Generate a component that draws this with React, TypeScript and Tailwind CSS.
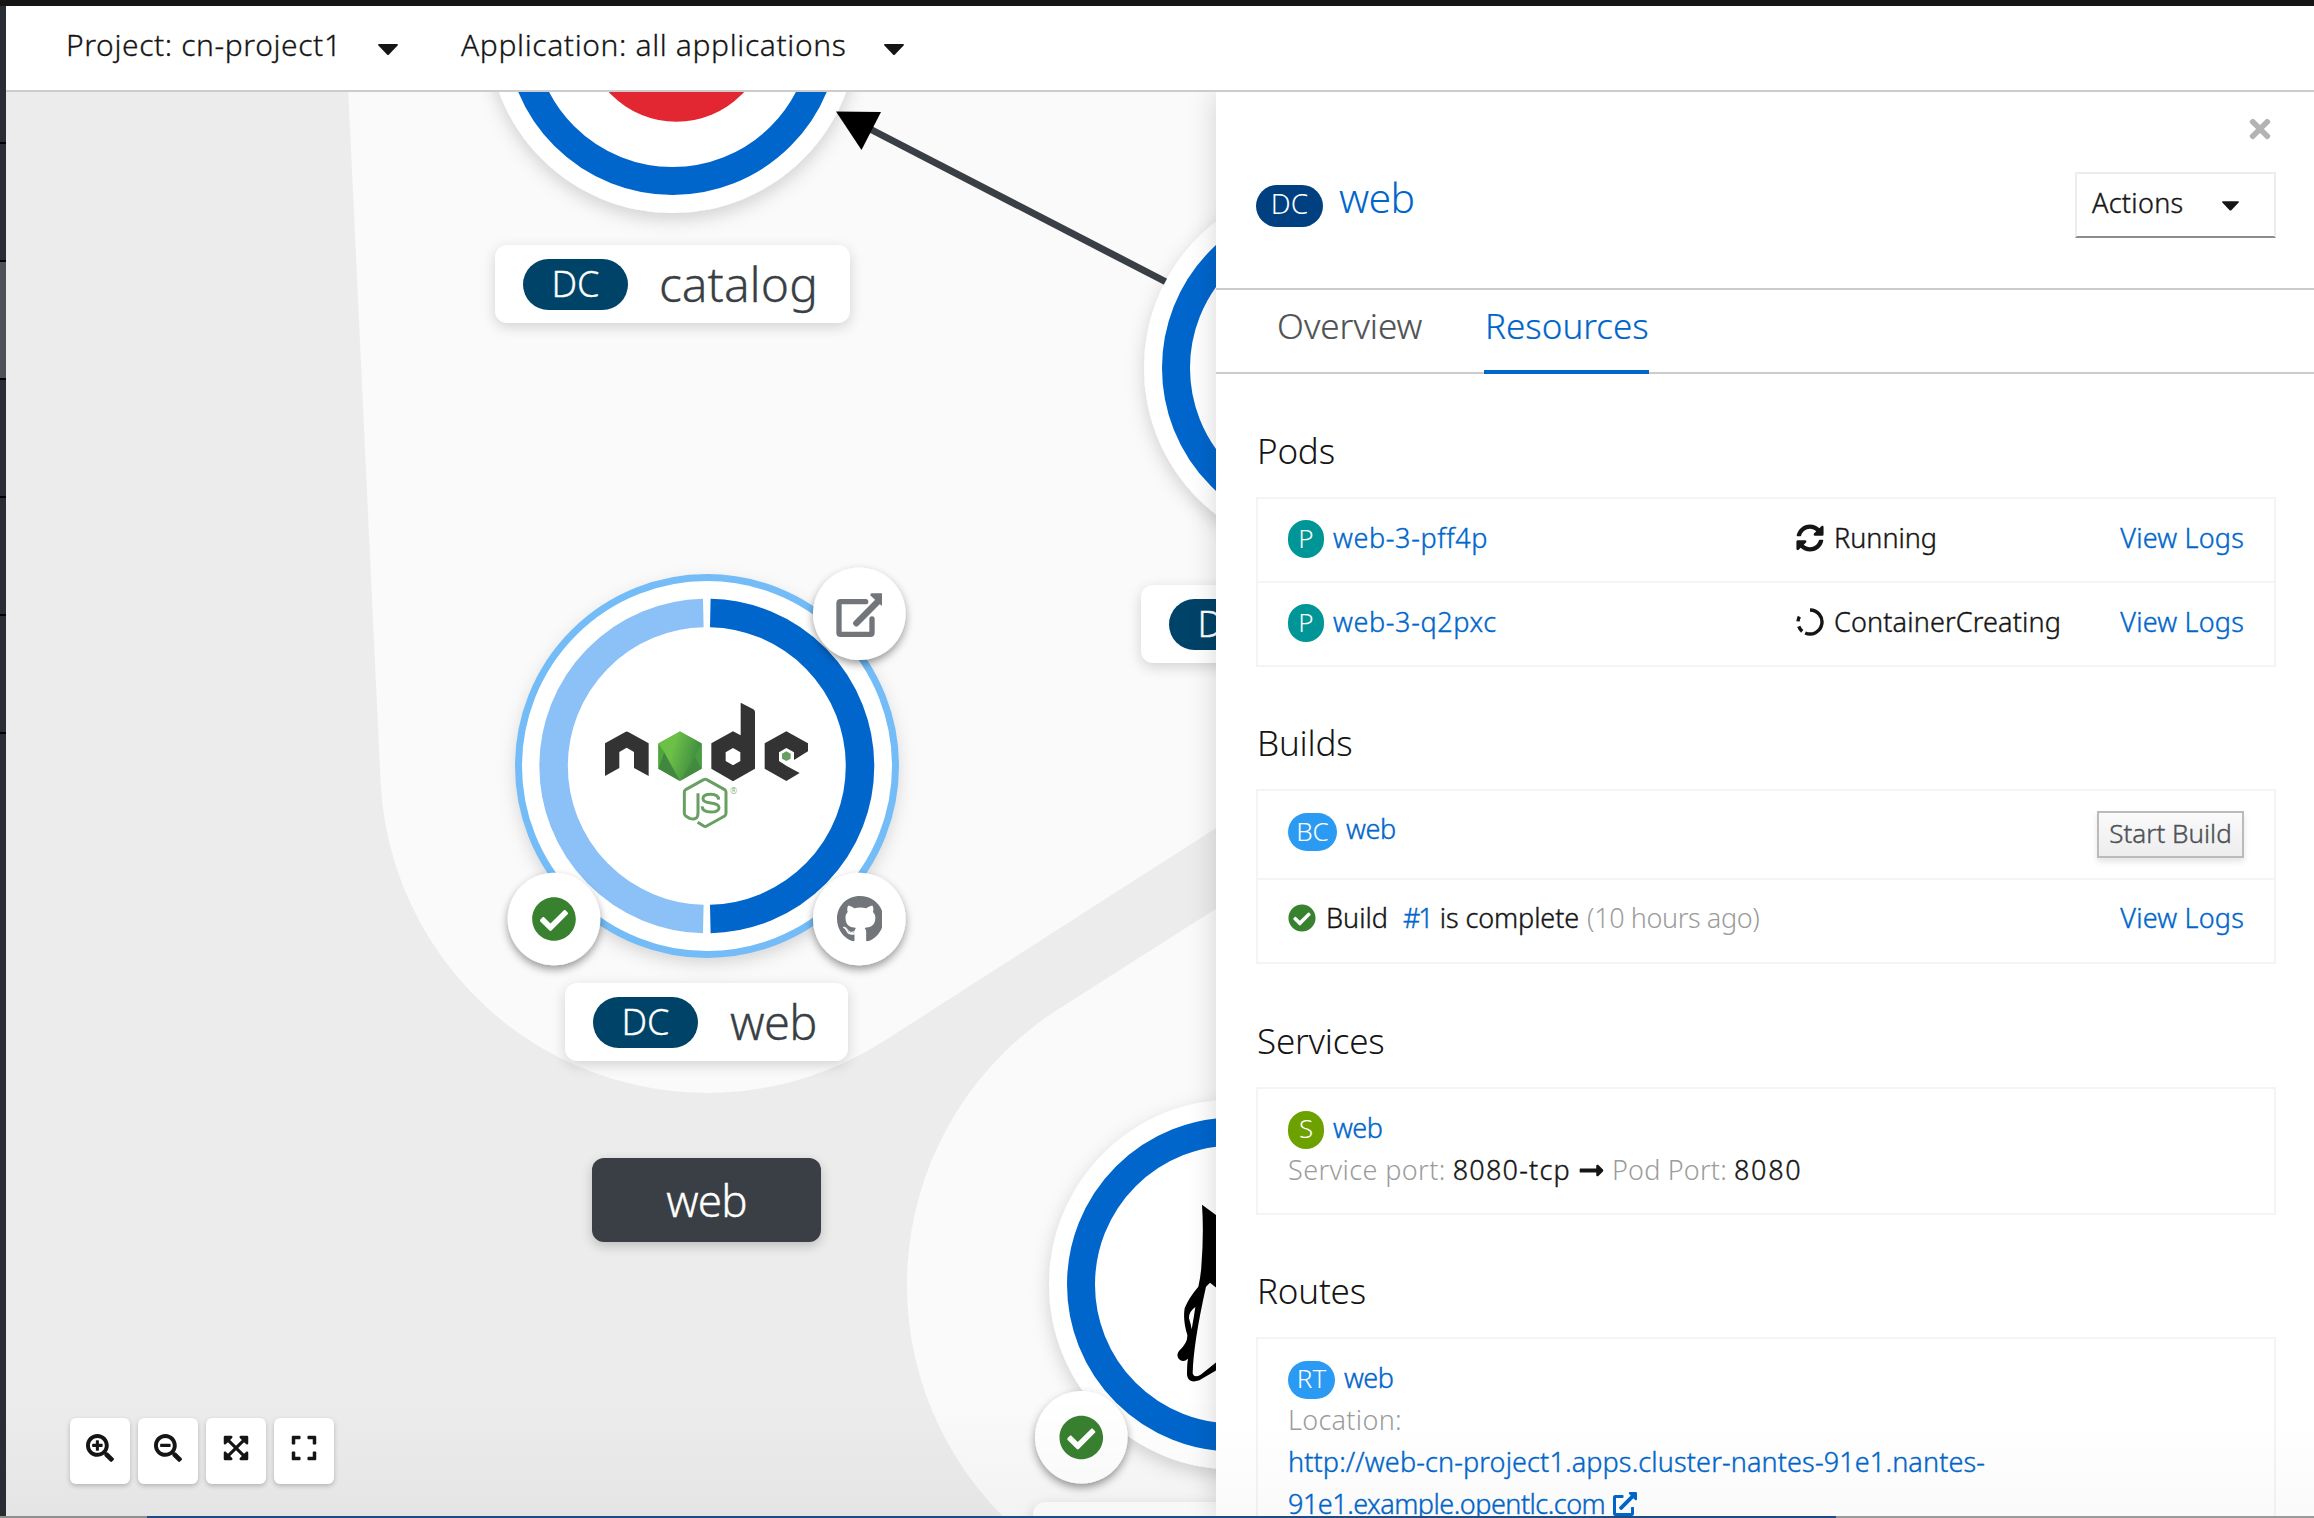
import type { ReactNode } from 'react';
import {
  FaCheckCircle,
  FaExpand,
  FaExpandArrowsAlt,
  FaExternalLinkAlt,
  FaGithub,
  FaLongArrowAltRight,
  FaSearchMinus,
  FaSearchPlus,
  FaSyncAlt,
  FaTimes,
} from 'react-icons/fa';

function Caret({ className = '' }: { className?: string }) {
  return (
    <svg viewBox="0 0 20 11" className={`shrink-0 ${className}`} fill="currentColor">
      <path d="M1 0h18q1.4.2.6 1.4l-8.6 9q-1 1-2 0l-8.6-9Q-.4.2 1 0z" />
    </svg>
  );
}

function InProgressIcon() {
  return (
    <svg viewBox="0 0 28 28" className="size-7" fill="none" stroke="currentColor" strokeWidth="3.4">
      <path d="M14 2A12 12 0 1 1 9.2 25" />
      <path d="M2 13.4A12 12 0 0 1 3.4 8.6" />
      <path d="M2.8 18.4A12 12 0 0 0 6.2 23.4" />
    </svg>
  );
}

function Header() {
  return (
    <header className="flex h-[86px] shrink-0 items-center border-b-2 border-[#cccccc] bg-white pb-[7px] pl-[60px] text-[30px] leading-10 text-[#151515] [-webkit-text-stroke:0.3px]">
      <span className="flex w-[395px] shrink-0 items-center">
        <span className="tracking-[0.6px]">Project: cn-project1</span>
        <Caret className="ml-[36px] mt-[9px] h-[11px] w-5" />
      </span>
      <span className="flex items-center">
        <span className="tracking-[0.62px]">Application: all applications</span>
        <Caret className="ml-[38px] mt-[9px] h-[11px] w-5" />
      </span>
    </header>
  );
}

function Ring({ cx, cy }: { cx: number; cy: number }) {
  return (
    <g>
      <circle cx={cx} cy={cy} r="185" fill="#fff" filter="url(#nodeShadow)" />
      <circle cx={cx} cy={cy} r="153" fill="none" stroke="#0066cc" strokeWidth="28" />
    </g>
  );
}

function Decorator({ cx, cy, children }: { cx: number; cy: number; children: ReactNode }) {
  return (
    <g>
      <circle cx={cx} cy={cy} r="46.3" fill="#fff" filter="url(#badgeShadow)" />
      {children}
    </g>
  );
}

function NodeLogo() {
  return (
    <g transform="translate(590 690) scale(0.33333)">
      <g fill="#333">
        <path d="M45 160L106 126Q110 123 115 126L176 160V258L132 234V186L110 173L88 186V234L45 258Z" />
        <path
          fillRule="evenodd"
          d="M429 124L452 136V38L490 58Q495 61 495 66V236L429 274L364 236V160ZM429 174L407 187V213L429 226L451 213V187Z"
        />
        <path d="M589 124L654 160V184L612 210V187L589 174L567 187V213L590 228L629 249L589 273L524 236V160Z" />
      </g>
      <path d="M270 124L335 160V236L270 273L205 236V160Z" fill="url(#leaf)" />
      <path d="M205 236L222 186L270 273Z" fill="#41873f" />
      <path d="M205 160V236L222 186Z" fill="#4aa63d" />
      <path d="M335 160L314 200L335 236Z" fill="#4b9b40" />
      <path d="M314 200L335 236L270 273Z" fill="#41873f" opacity=".55" />
      <path d="M589 184L602 191V206L589 213L576 206V191Z" fill="#689f63" />
      <g fill="none" stroke="#689f63" strokeWidth="9" strokeLinejoin="round">
        <path d="M323 397L341 408Q346 411 350 408L404 378Q408 375 408 370V306Q408 302 404 299L350 269Q346 266 341 269L287 299Q283 302 283 306V370Q283 375 287 378L299 385Q324 393 324 369V310" />
        <path d="M386 329Q385 313 362 313Q339 313 339 326Q339 336 362 339Q387 342 387 353Q387 366 363 366Q338 366 336 349" />
      </g>
      <text x="431" y="311" fontSize="26" textAnchor="middle" fill="#689f63">
        ®
      </text>
    </g>
  );
}

function Diagram() {
  return (
    <svg viewBox="6 92 1210 1424" className="block h-[1424px] w-[1210px]">
      <defs>
        <filter id="nodeShadow" x="-20%" y="-20%" width="140%" height="140%">
          <feDropShadow dx="0" dy="6" stdDeviation="9" floodColor="#030303" floodOpacity="0.17" />
        </filter>
        <filter id="badgeShadow" x="-30%" y="-30%" width="160%" height="160%">
          <feDropShadow dx="0" dy="4" stdDeviation="4" floodColor="#030303" floodOpacity="0.4" />
        </filter>
        <linearGradient id="leaf" x1="0.1" y1="0.3" x2="1" y2="0.6">
          <stop offset="0.25" stopColor="#6cbf47" />
          <stop offset="0.85" stopColor="#419041" />
        </linearGradient>
      </defs>

      <path d="M344 0L380.500 780A327 327 0 0 0 884 1041L1316 764V0Z" fill="#fafafa" />
      <path d="M1316 845L1057 1010A327 327 0 0 0 1002.500 1516H1316Z" fill="#fafafa" />

      <path d="M870 129L1170 284" stroke="#393f44" strokeWidth="7" />
      <Ring cx={672.5} cy={28} />
      <path d="M836 111.500L881 112L861.500 150Z" fill="#000" />
      <circle cx="676.4" cy="29.7" r="92" fill="#e22733" />
      <Ring cx={1329} cy={368} />
      <Ring cx={1234} cy={1284.5} />

      <g transform="translate(880 1060) scale(0.33333)">
        <path
          fill="#000"
          fillRule="evenodd"
          d="M966 434L1020 474V692L990 668L978 680Q940 850 938 940Q942 955 962 944L1020 898V924L958 961Q925 972 921 945Q921 910 924 896Q912 908 900 900Q886 888 897 873Q924 848 922 825Q908 780 914 745Q925 715 955 680Q962 650 964 620Q972 520 966 434ZM946 741Q926 755 927 775Q932 790 935 808Q942 770 946 741Z"
        />
      </g>

      <circle cx="707" cy="766" r="190" fill="#fff" filter="url(#nodeShadow)" />
      <circle cx="707" cy="766" r="188.5" fill="#fff" stroke="#73bcf7" strokeWidth="7" />
      <path d="M710.300 613A153.036 153.036 0 0 1 710.300 919" fill="none" stroke="#0066cc" strokeWidth="28.5" />
      <path d="M703.300 613A153.036 153.036 0 0 0 703.300 919" fill="none" stroke="#8bc1f7" strokeWidth="28.5" />
      <NodeLogo />

      <Decorator cx={859.3} cy={613.8}>
        <g transform="translate(800 550) scale(0.33333)" fill="none" stroke="#72767b" strokeWidth="16" strokeLinecap="round">
          <path d="M197 155H122Q117 155 117 160V248Q117 253 122 253H211Q216 253 216 248V207" />
          <path d="M169 220L236 152" strokeWidth="19" />
          <path d="M216 130H246V168L240 163L212 137Q209 131 216 130Z" fill="#72767b" stroke="none" />
        </g>
      </Decorator>
      <Decorator cx={859.3} cy={919}>
        <svg x="837" y="896" width="45" height="45.5" overflow="hidden">
          <FaGithub x="-0.75" y="-0.75" width="48" height="48" size={48} color="#72767b" />
        </svg>
      </Decorator>
      <Decorator cx={554} cy={919}>
        <FaCheckCircle x="531.5" y="896.5" size={45} color="#38812f" />
      </Decorator>
      <Decorator cx={1081.3} cy={1437.3}>
        <FaCheckCircle x="1058.8" y="1415" size={45} color="#38812f" />
      </Decorator>
    </svg>
  );
}

function NodeLabel({ className, children }: { className: string; children?: ReactNode }) {
  return (
    <div
      className={`absolute flex h-[78px] items-center rounded-[12px] bg-white pl-[28px] text-[#393f44] shadow-[0_4px_14px_rgba(3,3,3,0.16)] ${className}`}
    >
      <span className="flex h-[51px] w-[105px] shrink-0 items-center justify-center rounded-full bg-[#004368] text-[36px] leading-none text-white">
        DC
      </span>
      {children}
    </div>
  );
}

function ToolButton({ children }: { children: ReactNode }) {
  return (
    <button className="flex h-[66px] w-[60px] items-center justify-center rounded-[6px] bg-white pb-[7px] text-[#151515] shadow-[0_2px_5px_rgba(3,3,3,0.22)]">
      {children}
    </button>
  );
}

function Topology() {
  return (
    <main className="relative w-[1210px] shrink-0 overflow-hidden bg-[#ececec] [-webkit-text-stroke:0.3px]">
      <Diagram />
      <NodeLabel className="left-[489px] top-[153px] w-[355px]">
        <span className="ml-[31px] text-[48px] leading-none">catalog</span>
      </NodeLabel>
      <NodeLabel className="left-[559px] top-[891px] w-[283px]">
        <span className="ml-[32px] text-[47px] leading-none tracking-[-0.7px]">web</span>
      </NodeLabel>
      <NodeLabel className="left-[1135px] top-[493px] w-[300px]" />
      <NodeLabel className="left-[1027px] top-[1410px] w-[370px]" />
      <div className="absolute left-[586px] top-[1066px] flex h-[84px] w-[229px] items-center justify-center rounded-[12px] bg-[#393f44] text-[44px] leading-none tracking-[-0.8px] text-white shadow-[0_4px_12px_rgba(3,3,3,0.2)]">
        web
      </div>
      <div className="pointer-events-none absolute inset-x-0 bottom-0 h-[120px] bg-linear-to-b from-transparent to-black/3" />
      <div className="absolute bottom-[32px] left-[64px] flex gap-2">
        <ToolButton>
          <FaSearchPlus size={28} />
        </ToolButton>
        <ToolButton>
          <FaSearchMinus size={28} />
        </ToolButton>
        <ToolButton>
          <FaExpandArrowsAlt size={28} />
        </ToolButton>
        <ToolButton>
          <FaExpand size={28} />
        </ToolButton>
      </div>
    </main>
  );
}

function Badge({ className, children }: { className: string; children: ReactNode }) {
  return (
    <span
      className={`mr-[9px] flex h-[38px] shrink-0 items-center justify-center rounded-full pb-[3px] text-[26px] leading-none text-white [-webkit-text-stroke:0] ${className}`}
    >
      {children}
    </span>
  );
}

function Section({ title, className = '', children }: { title: string; className?: string; children: ReactNode }) {
  return (
    <section className={className}>
      <h2 className="mb-[22px] pl-px pt-0.5 text-[35px] leading-[48px] tracking-[-0.2px] text-[#151515]">{title}</h2>
      <div className="divide-y-2 divide-[#f4f4f4] border-2 border-[#f4f4f4] bg-white [-webkit-text-stroke:0.4px]">
        {children}
      </div>
    </section>
  );
}

function ViewLogs() {
  return <a className="ml-auto tracking-[0.2px] text-[#0066cc]">View Logs</a>;
}

function PodRow({
  className,
  name,
  icon,
  status,
}: {
  className: string;
  name: string;
  icon: ReactNode;
  status: ReactNode;
}) {
  return (
    <div className={`flex items-center pb-[5px] pl-[30px] pr-[30px] ${className}`}>
      <span className="flex w-[508px] items-center">
        <Badge className="mt-[3px] w-9 bg-[#009596]">P</Badge>
        <a className="tracking-[0.62px] text-[#0066cc]">{name}</a>
      </span>
      <span className="flex items-center gap-[10px]">
        {icon}
        {status}
      </span>
      <ViewLogs />
    </div>
  );
}

function SidePanel() {
  return (
    <aside className="relative w-[1098px] shrink-0 bg-white text-[27px] leading-[42px] text-[#151515] shadow-[0_0_28px_rgba(3,3,3,0.16)]">
      <div className="h-[198px] border-b-2 border-[#cccccc] pl-10 pr-[38px] pt-[22px]">
        <FaTimes size={30} className="ml-auto mr-px text-[#b3b3b3]" />
        <div className="mt-7 flex h-[66px] items-center">
          <span className="mt-0.5 flex h-[42px] w-[67px] items-center justify-center rounded-full bg-[#004080] pb-[7px] text-[28px] leading-none text-white">
            DC
          </span>
          <a className="mb-4 ml-4 text-[41px] leading-none tracking-[-0.7px] text-[#0066cc]">web</a>
          <button className="ml-auto flex h-[66px] w-[201px] items-center border-2 border-[#ededed] border-b-[#8a8d90] pb-[5px] pl-[15px] [-webkit-text-stroke:0.4px]">
            <span className="tracking-[0.3px]">Actions</span>
            <Caret className="ml-[38px] mt-[7px] h-2.5 w-[17px]" />
          </button>
        </div>
      </div>

      <nav className="flex h-[84px] border-b-2 border-[#cccccc] pl-[61px] text-[35px] leading-[48px] text-[#4f5255] [-webkit-text-stroke:0.2px]">
        <a className="h-[84px] w-[207px] pt-[12px]">Overview</a>
        <a className="h-[84px] w-[165px] border-b-4 border-[#0066cc] pl-px pt-[12px] text-[#0066cc]">Resources</a>
      </nav>

      <div className="pl-10 pr-[38px] pt-[51px]">
        <Section title="Pods">
          <PodRow
            className="h-[84px]"
            name="web-3-pff4p"
            icon={<FaSyncAlt size={28} />}
            status={<span>Running</span>}
          />
          <PodRow
            className="h-[82px]"
            name="web-3-q2pxc"
            icon={<InProgressIcon />}
            status={<span className="tracking-[0.15px]">ContainerCreating</span>}
          />
        </Section>

        <Section title="Builds" className="mt-[50px]">
          <div className="flex h-[89px] items-center pl-[30px] pr-[30px]">
            <Badge className="mb-[5px] w-[49px] bg-[#2b9af3]">BC</Badge>
            <a className="mb-[11px] tracking-[-0.4px] text-[#0066cc]">web</a>
            <button className="ml-auto flex h-[47px] w-[147px] items-center justify-center border-2 border-[#bbbbbb] bg-linear-to-b from-[#fafafa] to-[#ededed] pb-1 text-[26px] leading-none text-[#4d5258] shadow-[0_4px_6px_rgba(3,3,3,0.1)]">
              Start Build
            </button>
          </div>
          <div className="flex h-[82px] items-center pb-1.5 pl-[30px] pr-[30px]">
            <FaCheckCircle size={28} className="text-[#38812f]" />
            <span className="ml-[10px]">Build</span>
            <a className="ml-[15px] tracking-[-2px] text-[#0066cc]">#1</a>
            <span className="ml-2 tracking-[-0.1px]">is complete</span>
            <span className="ml-2 tracking-[-0.4px] text-[#9c9c9c] [-webkit-text-stroke:0]">(10 hours ago)</span>
            <ViewLogs />
          </div>
        </Section>

        <Section title="Services" className="mt-[51px]">
          <div className="h-[124px] pl-[30px] pt-[18px]">
            <div className="flex h-[42px] items-center">
              <Badge className="mt-[3px] w-9 bg-[#6ca100]">S</Badge>
              <a className="tracking-[-0.5px] text-[#0066cc]">web</a>
            </div>
            <div className="flex items-center">
              <span className="tracking-[0.4px] text-[#9c9c9c] [-webkit-text-stroke:0]">Service port:</span>
              <span className="ml-[7px] tracking-[1.2px]">8080-tcp</span>
              <FaLongArrowAltRight size={27} className="ml-[7px]" />
              <span className="ml-[7px] tracking-[0.2px] text-[#9c9c9c] [-webkit-text-stroke:0]">Pod Port:</span>
              <span className="ml-[7px] tracking-[1.7px]">8080</span>
            </div>
          </div>
        </Section>

        <Section title="Routes" className="mt-[50px]">
          <div className="h-[200px] pl-[30px] pt-[18px]">
            <div className="flex h-[42px] items-center">
              <Badge className="mt-[3px] w-[47px] bg-[#2b9af3]">RT</Badge>
              <a className="tracking-[-0.5px] text-[#0066cc]">web</a>
            </div>
            <div className="tracking-[0.3px] text-[#9c9c9c] [-webkit-text-stroke:0]">Location:</div>
            <a className="block text-[#0066cc]">
              <span className="block tracking-[0.13px]">http://web-cn-project1.apps.cluster-nantes-91e1.nantes-</span>
              <span className="flex items-center">
                <span className="tracking-[-0.5px]">91e1.example.opentlc.com</span>
                <FaExternalLinkAlt size={24} className="ml-2" />
              </span>
            </a>
          </div>
        </Section>
      </div>
      <div className="pointer-events-none absolute inset-x-0 bottom-0 h-[100px] bg-linear-to-b from-transparent to-black/2" />
    </aside>
  );
}

function NavEdge() {
  return (
    <div className="h-[1510px] w-1.5 shrink-0 bg-[#292e34] pt-[136px]">
      {[0, 1, 2, 3, 4, 5].map((i) => (
        <div key={i} className={`h-[118px] border-t-2 border-black ${i === 1 ? 'bg-[#4d5258]' : ''}`} />
      ))}
    </div>
  );
}

export default function App() {
  return (
    <div className="flex h-[1518px] w-[2314px] flex-col overflow-hidden bg-white font-['Noto_Sans',sans-serif] font-light whitespace-nowrap">
      <div className="h-1.5 shrink-0 bg-[#151515]" />
      <div className="flex h-[1510px] shrink-0">
        <NavEdge />
        <div className="flex w-[2308px] flex-col">
          <Header />
          <div className="flex h-[1424px] overflow-hidden">
            <Topology />
            <SidePanel />
          </div>
        </div>
      </div>
      <div className="flex h-0.5 shrink-0">
        <div className="w-[147px] bg-[#8f8f8f]" />
        <div className="w-[1689px] bg-[#1f4b83]" />
        <div className="flex-1 bg-[#9a9a9a]" />
      </div>
    </div>
  );
}
